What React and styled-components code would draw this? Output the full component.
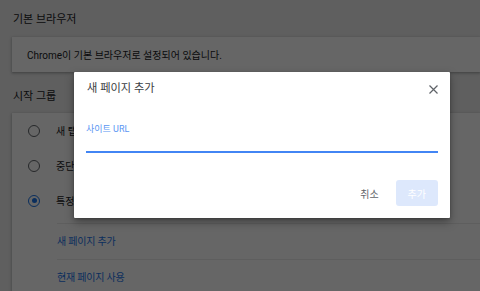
import styled, { createGlobalStyle } from "styled-components";

const GlobalStyle = createGlobalStyle`
  html, body {
    margin: 0;
    padding: 0;
    background: #eeeeee;
    font-family: Roboto, "Noto Sans CJK KR", sans-serif;
    overflow: hidden;
  }
`;

const Page = styled.div`
  position: relative;
  width: 480px;
  height: 291px;
  overflow: hidden;
  padding-left: 12px;
  box-sizing: border-box;
`;

const SectionTitle = styled.div`
  height: ${({ $h }) => $h}px;
  padding: ${({ $top }) => $top}px 0 0 1px;
  box-sizing: border-box;
  font-size: 11px;
  line-height: 16px;
  color: #202124;
`;

const Card = styled.div`
  background: #fff;
  box-shadow: 0 1px 2px rgba(60, 64, 67, 0.3), 0 1px 3px 1px rgba(60, 64, 67, 0.15);
`;

const CardText = styled.div`
  height: 35px;
  display: flex;
  align-items: center;
  padding-left: 15px;
  font-size: 10px;
  color: #202124;
`;

const RadioRow = styled.label`
  height: 35px;
  display: flex;
  align-items: center;
  gap: 16px;
  padding-left: 16px;
  font-size: 10px;
  color: #202124;
`;

const Radio = styled.span`
  width: 12px;
  height: 12px;
  box-sizing: border-box;
  border-radius: 50%;
  border: 1.5px solid ${({ $on }) => ($on ? "#1a73e8" : "#5f6368")};
  display: grid;
  place-items: center;

  &::after {
    content: "";
    width: 5px;
    height: 5px;
    border-radius: 50%;
    background: ${({ $on }) => ($on ? "#1a73e8" : "transparent")};
  }
`;

const SubList = styled.div`
  margin-left: 45px;
  padding-top: 5px;
`;

const SubItem = styled.div`
  height: 36px;
  padding-bottom: 2px;
  display: flex;
  align-items: center;
  border-top: 1px solid rgba(0, 0, 0, 0.08);
  box-sizing: border-box;
  font-size: 10px;
  color: #1a73e8;
  letter-spacing: -0.2px;
`;

const Scrim = styled.div`
  position: absolute;
  inset: 0;
  background: rgba(0, 0, 0, 0.6);
`;

const Dialog = styled.div`
  position: absolute;
  left: 74px;
  top: 72px;
  width: 376px;
  background: #fff;
  border-radius: 1px;
  box-shadow: 0 4px 10px rgba(0, 0, 0, 0.35), 0 1px 3px rgba(0, 0, 0, 0.2);
  display: flex;
  flex-direction: column;
`;

const Header = styled.div`
  height: 34px;
  padding: 7px 13px 0 13px;
  box-sizing: border-box;
  display: flex;
  justify-content: space-between;
  align-items: flex-start;
`;

const Title = styled.div`
  font-size: 11.25px;
  line-height: 20px;
  color: #3c4043;
`;

const Close = styled.button`
  border: 0;
  background: none;
  padding: 0;
  margin-top: 6px;
  width: 8px;
  height: 8px;
  display: grid;
  place-items: center;
  cursor: pointer;
`;

const Body = styled.div`
  padding: 16px 12px 0 12px;
`;

const Label = styled.div`
  font-size: 9px;
  line-height: 14px;
  color: #5b96f3;
`;

const Input = styled.input`
  display: block;
  width: 100%;
  height: 17px;
  box-sizing: border-box;
  border: 0;
  border-bottom: 2px solid #4285f4;
  outline: none;
  padding: 0;
  font: inherit;
  font-size: 10px;
  background: transparent;
`;

const Footer = styled.div`
  display: flex;
  justify-content: flex-end;
  align-items: center;
  gap: 9px;
  padding: 27px 12px 12px 0;
`;

const Button = styled.button`
  height: 26px;
  padding: 0 ${({ $primary }) => ($primary ? 12 : 8)}px;
  min-width: ${({ $primary }) => ($primary ? 42 : 0)}px;
  border: 0;
  border-radius: 3px;
  font-family: inherit;
  font-size: 10px;
  background: ${({ $primary }) => ($primary ? "#dde8fc" : "transparent")};
  color: ${({ $primary }) => ($primary ? "#ffffff" : "#5f6368")};
`;

export default function App() {
  return (
    <>
      <GlobalStyle />
      <Page>
        <SectionTitle $h={37} $top={12}>기본 브라우저</SectionTitle>
        <Card>
          <CardText>Chrome이 기본 브라우저로 설정되어 있습니다.</CardText>
        </Card>
        <SectionTitle $h={41} $top={17}>시작 그룹</SectionTitle>
        <Card>
          <RadioRow>
            <Radio />
            새 탭 페이지 열기
          </RadioRow>
          <RadioRow>
            <Radio />
            중단한 위치에서 계속하기
          </RadioRow>
          <RadioRow>
            <Radio $on />
            특정 페이지 또는 페이지 모음 열기
          </RadioRow>
          <SubList>
            <SubItem>새 페이지 추가</SubItem>
            <SubItem>현재 페이지 사용</SubItem>
          </SubList>
        </Card>
        <Scrim />
        <Dialog>
          <Header>
            <Title>새 페이지 추가</Title>
            <Close aria-label="닫기">
              <svg width="9" height="9" viewBox="0 0 9 9">
                <path d="M0.5 0.5L8.5 8.5M8.5 0.5L0.5 8.5" stroke="#5f6368" strokeWidth="1.2" />
              </svg>
            </Close>
          </Header>
          <Body>
            <Label>사이트 URL</Label>
            <Input />
          </Body>
          <Footer>
            <Button>취소</Button>
            <Button $primary>추가</Button>
          </Footer>
        </Dialog>
      </Page>
    </>
  );
}
